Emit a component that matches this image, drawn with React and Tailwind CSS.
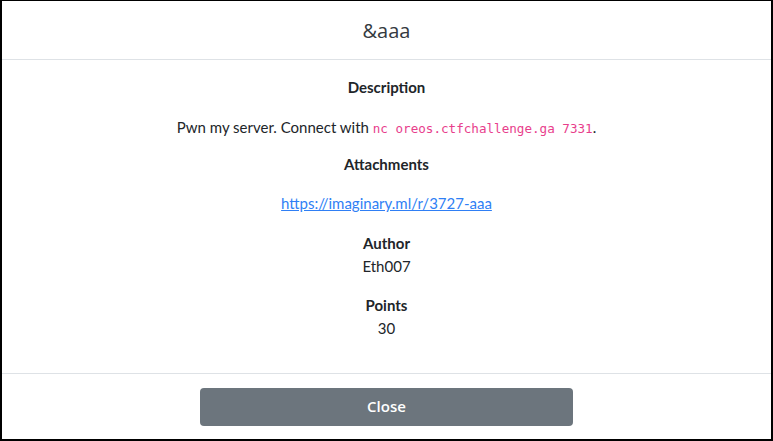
import React from 'react';

const body = { fontFamily: 'Lato, "Noto Sans", sans-serif' };
const ui = { fontFamily: '"Open Sans", "Noto Sans", sans-serif' };

function Section({ title, children, gap, className }) {
  return (
    <div className={'flex flex-col items-center ' + (className || '')}>
      <div className="font-bold text-[15px] text-[#212529]">{title}</div>
      <div className={gap}>{children}</div>
    </div>
  );
}

export default function App() {
  return (
    <div className="w-[773px] h-[441px] bg-white border-l-2 border-t border-r-2 border-b-2 border-black flex flex-col">
      <div className="h-[59px] flex items-center justify-center border-b border-[#dee2e6]" style={ui}>
        <h5 className="text-[20px] text-[#343a40] leading-none pt-[2px]">&amp;aaa</h5>
      </div>
      <div className="flex-1 flex flex-col items-center pt-[17px] text-[15px] leading-[20px] text-[#212529]" style={body}>
        <Section title="Description" gap="mt-[20px]">
          <p>
            Pwn my server. Connect with{' '}
            <code className="text-[#e83e8c] text-[12.6px]" style={{ fontFamily: '"DejaVu Sans Mono", monospace' }}>
              nc oreos.ctfchallenge.ga 7331
            </code>
            .
          </p>
        </Section>
        <Section title="Attachments" gap="mt-[19px]" className="mt-[15px]">
          <a href="#" className="text-[#2f7ff5] underline">https://imaginary.ml/r/3727-aaa</a>
        </Section>
        <Section title="Author" gap="mt-[3px]" className="mt-[20px]">
          <span>Eth007</span>
        </Section>
        <Section title="Points" gap="mt-[3px]" className="mt-[19px]">
          <span>30</span>
        </Section>
      </div>
      <div className="h-[66px] border-t border-[#dee2e6] flex items-center justify-center">
        <button className="w-[373px] h-[38px] rounded-[4px] bg-[#6c757d] text-white text-[15px] font-semibold" style={ui}>
          Close
        </button>
      </div>
    </div>
  );
}
